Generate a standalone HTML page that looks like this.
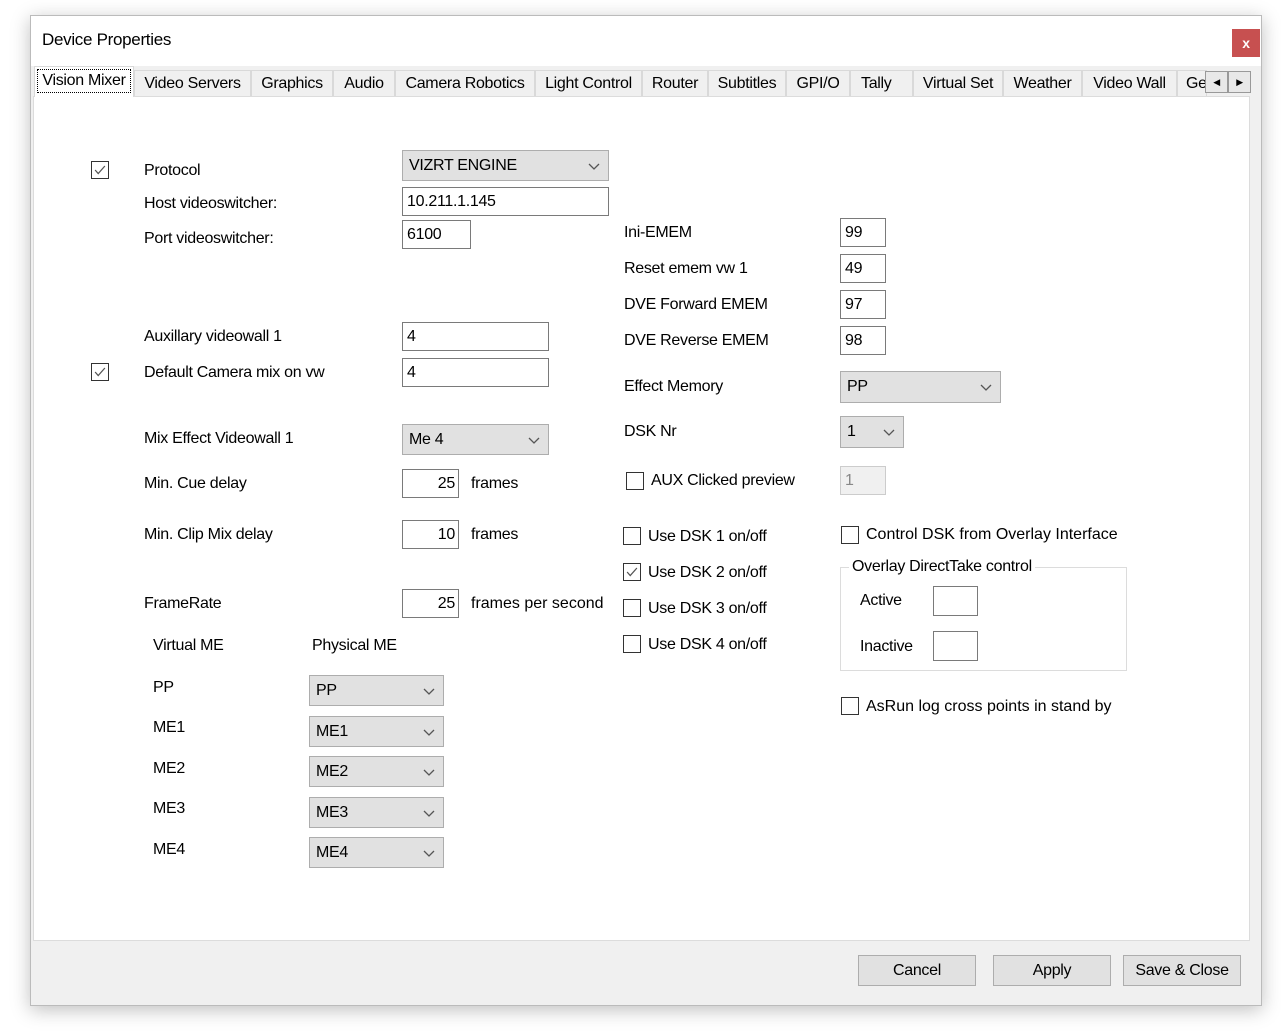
<!DOCTYPE html>
<html><head><meta charset="utf-8"><style>
*{box-sizing:border-box;margin:0;padding:0}
body{width:1281px;height:1032px;background:#fff;position:relative;overflow:hidden;font-family:"Liberation Sans",sans-serif;font-size:16px;color:#000;letter-spacing:-0.3px}
.a{position:absolute;white-space:nowrap}
.l{position:absolute;white-space:nowrap;line-height:22px;height:22px}
.win{position:absolute;left:30px;top:15px;width:1232px;height:991px;background:#f0f0f0;border:1px solid #bbb;box-shadow:0 4px 18px rgba(0,0,0,.25)}
.in{position:absolute;background:#fff;border:1px solid #7a7a7a;line-height:28px;padding-left:4px}
.cb{position:absolute;background:#e1e1e1;border:1px solid #adadad;line-height:30px;padding-left:6px}
.cb svg{position:absolute;right:8px;top:50%;margin-top:-3px}
.ck{position:absolute;width:18px;height:18px;border:1px solid #333;background:#fff}
.tab{position:absolute;top:70px;height:26px;background:#f0f0f0;border:1px solid #d9d9d9;border-bottom:none;line-height:25px;text-align:center}
.btn{position:absolute;top:955px;height:31px;width:118px;background:#e1e1e1;border:1px solid #adadad;text-align:center;line-height:29px}
</style></head><body>
<div class="win"></div>
<div class="a" style="left:31px;top:16px;width:1230px;height:50px;background:#fff"></div>
<div class="l" style="left:42px;top:29px;font-size:17px">Device Properties</div>
<div class="a" style="left:1232px;top:29px;width:28px;height:28px;background:#c75050;color:#fff;font-weight:bold;font-size:14px;text-align:center;line-height:28px">x</div>
<div class="a" style="left:33px;top:96px;width:1217px;height:845px;background:#fff;border:1px solid #dcdcdc"></div>
<div class="tab" style="left:34px;top:66px;width:100px;height:31px;background:#fff;z-index:2"><div style="position:absolute;left:2px;top:2px;right:2px;bottom:4px;border:1px dotted #000;line-height:22px">Vision Mixer</div></div>
<div class="tab" style="left:134px;width:117px">Video Servers</div>
<div class="tab" style="left:251px;width:82px">Graphics</div>
<div class="tab" style="left:333px;width:62px">Audio</div>
<div class="tab" style="left:395px;width:140px">Camera Robotics</div>
<div class="tab" style="left:535px;width:107px">Light Control</div>
<div class="tab" style="left:642px;width:66px">Router</div>
<div class="tab" style="left:708px;width:78px">Subtitles</div>
<div class="tab" style="left:786px;width:64px">GPI/O</div>
<div class="tab" style="left:850px;width:63px;text-align:left;padding-left:10px">Tally</div>
<div class="tab" style="left:913px;width:90px">Virtual Set</div>
<div class="tab" style="left:1003px;width:79px">Weather</div>
<div class="tab" style="left:1082px;width:95px">Video Wall</div>
<div class="tab" style="left:1177px;width:30px;overflow:hidden;text-align:left;padding-left:8px">Ge</div>
<div class="a" style="left:1205px;top:71px;width:23px;height:22px;background:#e8e8e8;border:1px solid #999;font-size:9px;text-align:center;line-height:20px">◀</div>
<div class="a" style="left:1228px;top:71px;width:23px;height:22px;background:#e8e8e8;border:1px solid #999;font-size:9px;text-align:center;line-height:20px">▶</div>

<svg width="0" height="0" style="position:absolute"><defs><symbol id="ch" viewBox="0 0 12 7"><path d="M1 1l5 5 5-5" fill="none" stroke="#555" stroke-width="1.3"/></symbol><symbol id="tk" viewBox="0 0 18 18"><path d="M3.5 9l3.5 4 7.5-8.5" fill="none" stroke="#555" stroke-width="1.4"/></symbol></defs></svg>

<div class="ck" style="left:91px;top:161px"><svg width="16" height="16" viewBox="0 0 18 18"><use href="#tk"/></svg></div>
<div class="l" style="left:144px;top:160px">Protocol</div>
<div class="cb" style="left:402px;top:150px;width:207px;height:31px">VIZRT ENGINE<svg width="12" height="7"><use href="#ch"/></svg></div>
<div class="l" style="left:144px;top:193px">Host videoswitcher:</div>
<div class="in" style="left:402px;top:187px;width:207px;height:29px">10.211.1.145</div>
<div class="l" style="left:144px;top:228px">Port videoswitcher:</div>
<div class="in" style="left:402px;top:220px;width:69px;height:29px">6100</div>
<div class="l" style="left:144px;top:326px">Auxillary videowall 1</div>
<div class="in" style="left:402px;top:322px;width:147px;height:29px">4</div>
<div class="ck" style="left:91px;top:363px"><svg width="16" height="16" viewBox="0 0 18 18"><use href="#tk"/></svg></div>
<div class="l" style="left:144px;top:362px">Default Camera mix on vw</div>
<div class="in" style="left:402px;top:358px;width:147px;height:29px">4</div>
<div class="l" style="left:144px;top:428px">Mix Effect Videowall 1</div>
<div class="cb" style="left:402px;top:424px;width:147px;height:31px">Me 4<svg width="12" height="7"><use href="#ch"/></svg></div>
<div class="l" style="left:144px;top:473px">Min. Cue delay</div>
<div class="in" style="left:402px;top:469px;width:57px;height:29px;text-align:right;padding-right:3px">25</div>
<div class="l" style="left:471px;top:473px">frames</div>
<div class="l" style="left:144px;top:524px">Min. Clip Mix delay</div>
<div class="in" style="left:402px;top:520px;width:57px;height:29px;text-align:right;padding-right:3px">10</div>
<div class="l" style="left:471px;top:524px">frames</div>
<div class="l" style="left:144px;top:593px">FrameRate</div>
<div class="in" style="left:402px;top:589px;width:57px;height:29px;text-align:right;padding-right:3px">25</div>
<div class="l" style="left:471px;top:593px;letter-spacing:0">frames per second</div>
<div class="l" style="left:153px;top:635px">Virtual ME</div>
<div class="l" style="left:312px;top:635px">Physical ME</div>
<div class="l" style="left:153px;top:677px">PP</div>
<div class="cb" style="left:309px;top:675px;width:135px;height:31px">PP<svg width="12" height="7"><use href="#ch"/></svg></div>
<div class="l" style="left:153px;top:717px">ME1</div>
<div class="cb" style="left:309px;top:716px;width:135px;height:31px">ME1<svg width="12" height="7"><use href="#ch"/></svg></div>
<div class="l" style="left:153px;top:758px">ME2</div>
<div class="cb" style="left:309px;top:756px;width:135px;height:31px">ME2<svg width="12" height="7"><use href="#ch"/></svg></div>
<div class="l" style="left:153px;top:798px">ME3</div>
<div class="cb" style="left:309px;top:797px;width:135px;height:31px">ME3<svg width="12" height="7"><use href="#ch"/></svg></div>
<div class="l" style="left:153px;top:839px">ME4</div>
<div class="cb" style="left:309px;top:837px;width:135px;height:31px">ME4<svg width="12" height="7"><use href="#ch"/></svg></div>

<div class="l" style="left:624px;top:222px">Ini-EMEM</div>
<div class="in" style="left:840px;top:218px;width:46px;height:29px">99</div>
<div class="l" style="left:624px;top:258px">Reset emem vw 1</div>
<div class="in" style="left:840px;top:254px;width:46px;height:29px">49</div>
<div class="l" style="left:624px;top:294px">DVE Forward EMEM</div>
<div class="in" style="left:840px;top:290px;width:46px;height:29px">97</div>
<div class="l" style="left:624px;top:330px">DVE Reverse EMEM</div>
<div class="in" style="left:840px;top:326px;width:46px;height:29px">98</div>
<div class="l" style="left:624px;top:376px">Effect Memory</div>
<div class="cb" style="left:840px;top:371px;width:161px;height:32px">PP<svg width="12" height="7"><use href="#ch"/></svg></div>
<div class="l" style="left:624px;top:421px">DSK Nr</div>
<div class="cb" style="left:840px;top:416px;width:64px;height:32px">1<svg width="12" height="7"><use href="#ch"/></svg></div>
<div class="ck" style="left:626px;top:472px"></div>
<div class="l" style="left:651px;top:470px">AUX Clicked preview</div>
<div class="in" style="left:840px;top:466px;width:46px;height:29px;background:#f0f0f0;border-color:#ccc;color:#888">1</div>
<div class="ck" style="left:623px;top:527px"></div>
<div class="l" style="left:648px;top:526px">Use DSK 1 on/off</div>
<div class="ck" style="left:623px;top:563px"><svg width="16" height="16" viewBox="0 0 18 18"><use href="#tk"/></svg></div>
<div class="l" style="left:648px;top:562px">Use DSK 2 on/off</div>
<div class="ck" style="left:623px;top:599px"></div>
<div class="l" style="left:648px;top:598px">Use DSK 3 on/off</div>
<div class="ck" style="left:623px;top:635px"></div>
<div class="l" style="left:648px;top:634px">Use DSK 4 on/off</div>
<div class="ck" style="left:841px;top:526px"></div>
<div class="l" style="left:866px;top:524px;letter-spacing:0">Control DSK from Overlay Interface</div>
<div class="a" style="left:840px;top:567px;width:287px;height:104px;border:1px solid #dcdcdc"></div>
<div class="l" style="left:849px;top:556px;background:#fff;padding:0 3px">Overlay DirectTake control</div>
<div class="l" style="left:860px;top:590px">Active</div>
<div class="in" style="left:933px;top:586px;width:45px;height:30px"></div>
<div class="l" style="left:860px;top:636px">Inactive</div>
<div class="in" style="left:933px;top:631px;width:45px;height:30px"></div>
<div class="ck" style="left:841px;top:697px"></div>
<div class="l" style="left:866px;top:696px;letter-spacing:0">AsRun log cross points in stand by</div>

<div class="btn" style="left:858px">Cancel</div>
<div class="btn" style="left:993px">Apply</div>
<div class="btn" style="left:1123px">Save &amp; Close</div>
</body></html>
